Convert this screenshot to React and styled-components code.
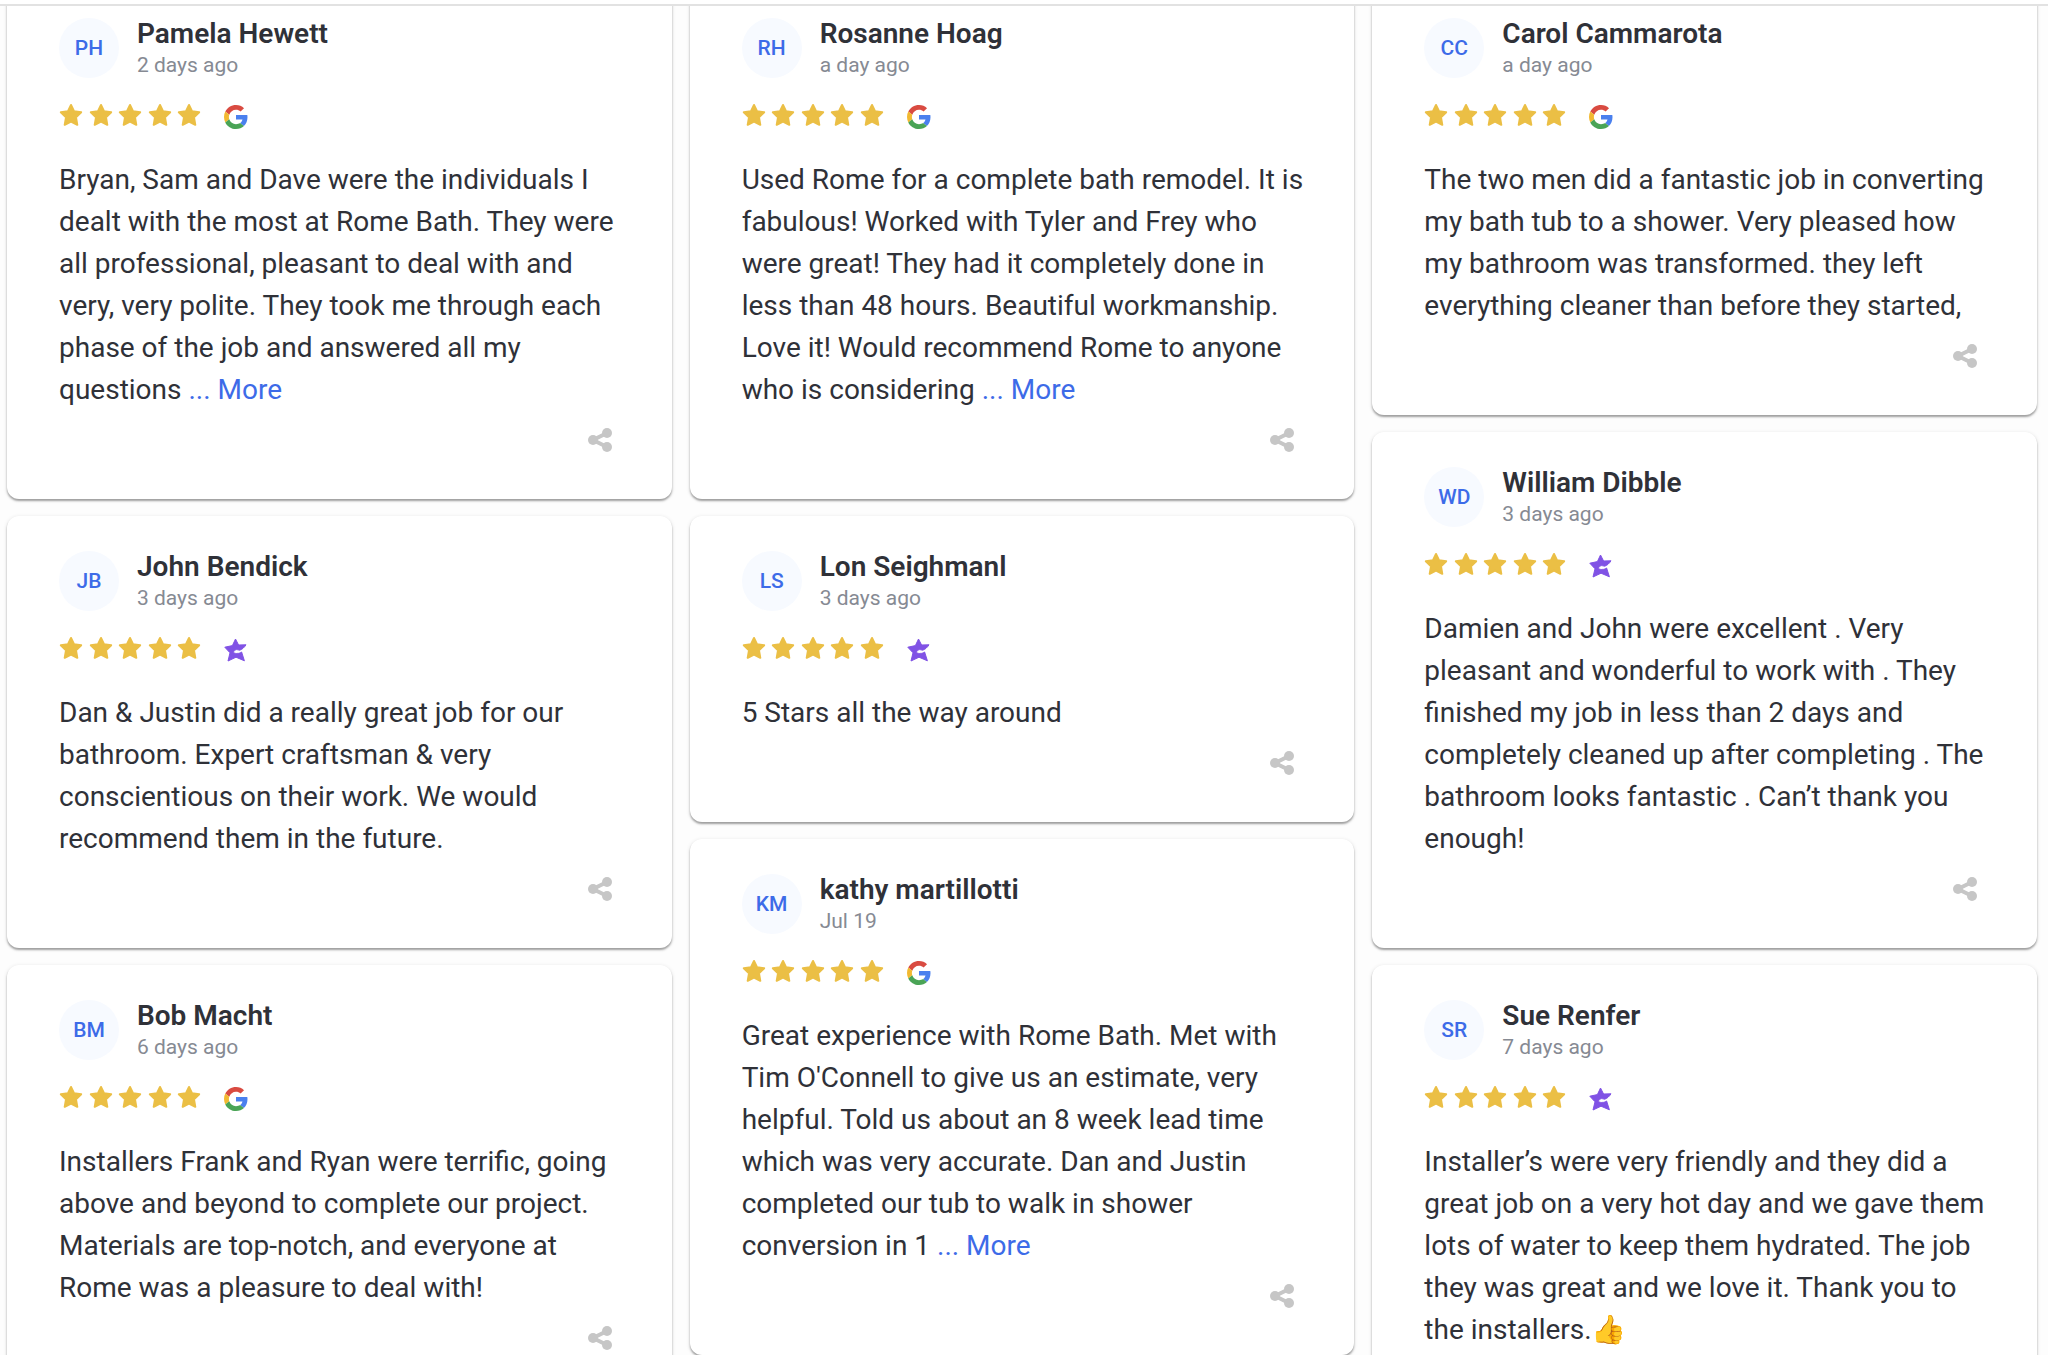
import styled, { createGlobalStyle } from 'styled-components';

const columns = [
    [
        {
            initials: 'PH', name: 'Pamela Hewett', date: '2 days ago', source: 'google', more: true,
            text: 'Bryan, Sam and Dave were the individuals I dealt with the most at Rome Bath. They were all professional, pleasant to deal with and very, very polite. They took me through each phase of the job and answered all my questions',
        },
        {
            initials: 'JB', name: 'John Bendick', date: '3 days ago', source: 'star',
            text: 'Dan & Justin did a really great job for our bathroom. Expert craftsman & very conscientious on their work. We would recommend them in the future.',
        },
        {
            initials: 'BM', name: 'Bob Macht', date: '6 days ago', source: 'google',
            text: 'Installers Frank and Ryan were terrific, going above and beyond to complete our project. Materials are top-notch, and everyone at Rome was a pleasure to deal with!',
        },
    ],
    [
        {
            initials: 'RH', name: 'Rosanne Hoag', date: 'a day ago', source: 'google', more: true,
            text: 'Used Rome for a complete bath remodel. It is fabulous! Worked with Tyler and Frey who were great! They had it completely done in less than 48 hours. Beautiful workmanship. Love it! Would recommend Rome to anyone who is considering',
        },
        {
            initials: 'LS', name: 'Lon Seighmanl', date: '3 days ago', source: 'star',
            text: '5 Stars all the way around',
        },
        {
            initials: 'KM', name: 'kathy martillotti', date: 'Jul 19', source: 'google', more: true,
            text: "Great experience with Rome Bath. Met with Tim O'Connell to give us an estimate, very helpful. Told us about an 8 week lead time which was very accurate. Dan and Justin completed our tub to walk in shower conversion in 1",
        },
    ],
    [
        {
            initials: 'CC', name: 'Carol Cammarota', date: 'a day ago', source: 'google',
            text: 'The two men did a fantastic job in converting my bath tub to a shower. Very pleased how my bathroom was transformed. they left everything cleaner than before they started,',
        },
        {
            initials: 'WD', name: 'William Dibble', date: '3 days ago', source: 'star',
            text: 'Damien and John were excellent . Very pleasant and wonderful to work with . They finished my job in less than 2 days and completely cleaned up after completing . The bathroom looks fantastic . Can’t thank you enough!',
        },
        {
            initials: 'SR', name: 'Sue Renfer', date: '7 days ago', source: 'star',
            text: 'Installer’s were very friendly and they did a great job on a very hot day and we gave them lots of water to keep them hydrated. The job they was great and we love it. Thank you to the installers.👍',
        },
    ],
];

const Star = () => (
    <StarIcon viewBox="0 0 24 24" aria-hidden="true">
        <path
            d="M12 2 L15 8.2 L22.2 9.2 L17 14.3 L18.3 21.8 L12 18.7 L5.7 21.8 L7 14.3 L1.8 9.2 L9 8.2 Z"
            fill="#ebbf45" stroke="#ebbf45" strokeWidth="2" strokeLinejoin="round"
        />
    </StarIcon>
);

const GoogleIcon = () => (
    <SourceIcon viewBox="0 0 48 48" role="img" aria-label="Google">
        <path fill="#d94b41" d="M24 9.5c3.54 0 6.71 1.22 9.21 3.6l6.85-6.85C35.9 2.38 30.47 0 24 0 14.62 0 6.51 5.38 2.56 13.22l7.98 6.19C12.43 13.72 17.74 9.5 24 9.5z" />
        <path fill="#4a80ee" d="M46.98 24.55c0-1.57-.15-3.09-.38-4.55H24v9.02h12.94c-.58 2.96-2.26 5.48-4.78 7.18l7.73 6c4.51-4.18 7.09-10.36 7.09-17.65z" />
        <path fill="#f2b931" d="M10.53 28.59c-.48-1.45-.76-2.99-.76-4.59s.27-3.14.76-4.59l-7.98-6.19C.92 16.46 0 20.12 0 24s.92 7.54 2.56 10.78l7.97-6.19z" />
        <path fill="#4aa456" d="M24 48c6.48 0 11.93-2.13 15.89-5.81l-7.73-6c-2.15 1.45-4.92 2.3-8.16 2.3-6.26 0-11.57-4.22-13.47-9.91l-7.98 6.19C6.51 42.62 14.62 48 24 48z" />
    </SourceIcon>
);

const PurpleStarIcon = () => (
    <SourceIcon viewBox="0 0 24 24" role="img" aria-label="Review site">
        <path
            d="M11.5 1 L14.6 7 L22 6.8 C20.2 9.6 18 11.6 15.6 12.2 C14.4 12.2 13.6 11.4 12.6 11.6 C10.8 12 9.4 13.2 9.6 14.4 C10.6 15.4 12.2 15.6 13.2 15.4 C14.8 15.6 16.4 14.8 17.6 14 L20.4 22.8 L12 19.2 L4 23 L6 14.8 L0.8 9.2 L8.4 7.6 Z"
            fill="#8052e5" stroke="#8052e5" strokeWidth="1" strokeLinejoin="round"
        />
    </SourceIcon>
);

const ShareIcon = () => (
    <svg width="24" height="24" viewBox="0 0 24 24" aria-hidden="true">
        <path d="M19 5 L5 12 L19 19" fill="none" stroke="#c6c6c6" strokeWidth="4" />
        <circle cx="5" cy="12" r="5" fill="#c6c6c6" />
        <circle cx="19" cy="5" r="5" fill="#c6c6c6" />
        <circle cx="19" cy="19" r="5" fill="#c6c6c6" />
    </svg>
);

const ReviewCard = ({ review }) => (
    <Card>
        <Header>
            <Avatar>{review.initials}</Avatar>
            <div>
                <Name>{review.name}</Name>
                <PostedAt>{review.date}</PostedAt>
            </div>
        </Header>
        <Rating>
            <Stars role="img" aria-label="5 out of 5 stars">
                {[1, 2, 3, 4, 5].map((n) => <Star key={n} />)}
            </Stars>
            {review.source === 'google' ? <GoogleIcon /> : <PurpleStarIcon />}
        </Rating>
        <Text>
            {review.text}
            {review.more && <> <More href="#more">... More</More></>}
        </Text>
        <Footer>
            <ShareButton type="button" aria-label={`Share review by ${review.name}`}>
                <ShareIcon />
            </ShareButton>
        </Footer>
    </Card>
);

const App = () => (
    <>
        <GlobalStyle />
        <Page>
            <TopEdge />
            <Viewport>
                <Columns>
                    {columns.map((reviews, index) => (
                        <Column key={index}>
                            {reviews.map((review) => <ReviewCard key={review.name} review={review} />)}
                        </Column>
                    ))}
                </Columns>
            </Viewport>
        </Page>
    </>
);

const GlobalStyle = createGlobalStyle`
  * {
    box-sizing: border-box;
  }

  body {
    margin: 0;
    background: #fdfdfd;
    color: #2f3138;
    font-family: Roboto, "Noto Color Emoji", sans-serif;
  }
`;

const Page = styled.main`
  display: flex;
  flex-direction: column;
  height: 100vh;
`;

const TopEdge = styled.div`
  flex: none;
  height: 6px;
  background: #fff;
  border-bottom: 2px solid #e2e2e2;
`;

const Viewport = styled.div`
  flex: 1;
  min-height: 0;
  overflow: hidden;
`;

// The list is scrolled a little, so the first cards run under the top edge
const Columns = styled.div`
  display: grid;
  grid-template-columns: repeat(3, minmax(0, 1fr));
  gap: 18px;
  margin-top: -23px;
  padding: 0 11px 0 7px;
`;

const Column = styled.div`
  display: flex;
  flex-direction: column;
  gap: 17px;
`;

const Card = styled.article`
  padding: 35px 48px 47px 52px;
  background: #fff;
  border-radius: 12px;
  box-shadow: 0 2px 2px rgba(0, 0, 0, 0.32), 0 1px 4px rgba(0, 0, 0, 0.12);
`;

const Header = styled.header`
  display: flex;
  gap: 18px;
  height: 60px;
`;

const Avatar = styled.div`
  display: flex;
  align-items: center;
  justify-content: center;
  width: 60px;
  height: 60px;
  border-radius: 50%;
  background: #f7faff;
  color: #3d6be8;
  font-size: 21px;
  font-weight: 500;
`;

const Name = styled.h2`
  margin: 0;
  font-size: 28px;
  font-weight: 600;
  line-height: 32px;
`;

const PostedAt = styled.time`
  display: block;
  color: #868a93;
  font-size: 21px;
  line-height: 30px;
`;

const Rating = styled.div`
  display: flex;
  align-items: center;
  gap: 23px;
  height: 77px;
  margin-bottom: 4px;
`;

const Stars = styled.div`
  display: flex;
  justify-content: space-between;
  width: 142px;
  padding-bottom: 3px;
`;

const StarIcon = styled.svg`
  width: 24px;
  height: 24px;
`;

const SourceIcon = styled.svg`
  width: 24px;
  height: 24px;
`;

const Text = styled.p`
  margin: 0;
  font-size: 28px;
  line-height: 42px;
`;

const More = styled.a`
  color: #3d6be8;
  text-decoration: none;
`;

const Footer = styled.footer`
  display: flex;
  justify-content: flex-end;
  margin-top: 17px;
  padding-right: 12px;
`;

const ShareButton = styled.button`
  display: flex;
  padding: 0;
  border: none;
  background: none;
  cursor: pointer;
`;

export default App;
